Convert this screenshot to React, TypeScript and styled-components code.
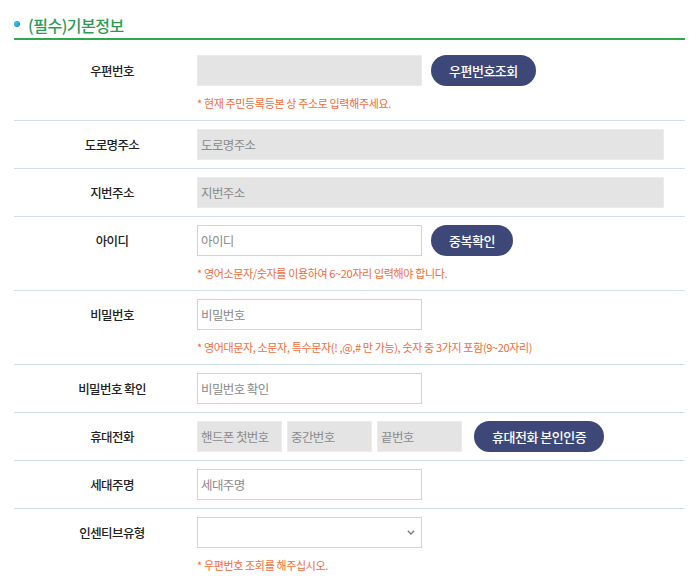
import { createGlobalStyle, styled } from "styled-components";

const GlobalStyle = createGlobalStyle`
  body {
    margin: 0;
    background: #fff;
    font-family: "Noto Sans CJK KR", "Noto Sans", sans-serif;
    color: #222;
  }
`

const Wrapper = styled.div`
  width: 671px;
  margin-left: 14px;
`

const Title = styled.h2`
  display: flex;
  align-items: center;
  gap: 8px;
  margin: 0;
  padding: 14px 0 2px 0;
  height: 22px;
  border-bottom: 2px solid #2fa84f;
  font-size: 16px;
  font-weight: 500;
  line-height: 22px;
  color: #2f9a55;
  letter-spacing: -0.5px;
`

const Dot = styled.span`
  width: 6px;
  height: 6px;
  margin-top: -2px;
  border-radius: 50%;
  background: radial-gradient(circle at 35% 35%, #3cc6e8, #1a7fc8);
`

const Form = styled.div`
  margin-top: 7px;
`

const Row = styled.div<{ last?: boolean }>`
  display: flex;
  padding: 8px 0;
  border-bottom: ${({ last }) => (last ? "none" : "1px solid #cfe0ea")};
`

const Label = styled.div`
  width: 170px;
  padding-left: 13px;
  height: 31px;
  line-height: 31px;
  text-align: center;
  font-size: 12.5px;
  font-weight: 500;
  letter-spacing: -0.6px;
  color: #222;
`

const Field = styled.div`
  flex: 1;
`

const Line = styled.div`
  display: flex;
  align-items: center;
  gap: 9px;
`

const Input = styled.input<{ w: number; gray?: boolean }>`
  box-sizing: border-box;
  width: ${({ w }) => w}px;
  height: 31px;
  padding: 0 3px;
  border: 1px solid ${({ gray }) => (gray ? "#ebebeb" : "#d3d3d3")};
  background: ${({ gray }) => (gray ? "#e4e4e4" : "#fff")};
  font-family: inherit;
  font-size: 12.5px;
  letter-spacing: -0.6px;
  color: #333;
  outline: none;

  &::placeholder {
    color: #8a8a8a;
  }
`

const PhoneGroup = styled.div`
  display: flex;
  gap: 5px;
  margin-right: 3px;
`

const SelectBox = styled.div`
  position: relative;
  width: 225px;
  height: 31px;
`

const Select = styled.select`
  box-sizing: border-box;
  width: 100%;
  height: 100%;
  border: 1px solid #d3d3d3;
  background: #fff;
  appearance: none;
  font-family: inherit;
  font-size: 12px;
  outline: none;
`

const Chevron = styled.svg`
  position: absolute;
  right: 7px;
  top: 13px;
  pointer-events: none;
`

const Button = styled.button`
  height: 31px;
  padding: 0 18px;
  border: none;
  border-radius: 16px;
  background: #3d4878;
  color: #fff;
  font-family: inherit;
  font-size: 13px;
  font-weight: 500;
  letter-spacing: -0.5px;
  cursor: pointer;
`

const Hint = styled.p`
  margin: 8px 0 0 0;
  line-height: 18px;
  font-size: 11px;
  letter-spacing: -0.35px;
  color: #f26b3a;
`

const App = () => {
  return (
    <Wrapper>
      <GlobalStyle />
      <Title>
        <Dot />
        (필수)기본정보
      </Title>
      <Form>
        <Row>
          <Label>우편번호</Label>
          <Field>
            <Line>
              <Input w={225} gray readOnly />
              <Button>우편번호조회</Button>
            </Line>
            <Hint>* 현재 주민등록등본 상 주소로 입력해주세요.</Hint>
          </Field>
        </Row>
        <Row>
          <Label>도로명주소</Label>
          <Field>
            <Input w={467} gray readOnly placeholder="도로명주소" />
          </Field>
        </Row>
        <Row>
          <Label>지번주소</Label>
          <Field>
            <Input w={467} gray readOnly placeholder="지번주소" />
          </Field>
        </Row>
        <Row>
          <Label>아이디</Label>
          <Field>
            <Line>
              <Input w={225} placeholder="아이디" />
              <Button>중복확인</Button>
            </Line>
            <Hint>* 영어소문자/숫자를 이용하여 6~20자리 입력해야 합니다.</Hint>
          </Field>
        </Row>
        <Row>
          <Label>비밀번호</Label>
          <Field>
            <Input w={225} type="password" placeholder="비밀번호" />
            <Hint>* 영어대문자, 소문자, 특수문자(! ,@,# 만 가능), 숫자 중 3가지 포함(9~20자리)</Hint>
          </Field>
        </Row>
        <Row>
          <Label>비밀번호 확인</Label>
          <Field>
            <Input w={225} type="password" placeholder="비밀번호 확인" />
          </Field>
        </Row>
        <Row>
          <Label>휴대전화</Label>
          <Field>
            <Line>
              <PhoneGroup>
                <Input w={85} gray readOnly placeholder="핸드폰 첫번호" />
                <Input w={85} gray readOnly placeholder="중간번호" />
                <Input w={85} gray readOnly placeholder="끝번호" />
              </PhoneGroup>
              <Button>휴대전화 본인인증</Button>
            </Line>
          </Field>
        </Row>
        <Row>
          <Label>세대주명</Label>
          <Field>
            <Input w={225} placeholder="세대주명" />
          </Field>
        </Row>
        <Row last>
          <Label>인센티브유형</Label>
          <Field>
            <SelectBox>
              <Select defaultValue="">
                <option value=""></option>
              </Select>
              <Chevron width="8" height="5" viewBox="0 0 8 5">
                <path d="M0.8 0.8 L4 4 L7.2 0.8" fill="none" stroke="#777" strokeWidth="1.3" />
              </Chevron>
            </SelectBox>
            <Hint>* 우편번호 조회를 해주십시오.</Hint>
          </Field>
        </Row>
      </Form>
    </Wrapper>
  )
}

export default App
